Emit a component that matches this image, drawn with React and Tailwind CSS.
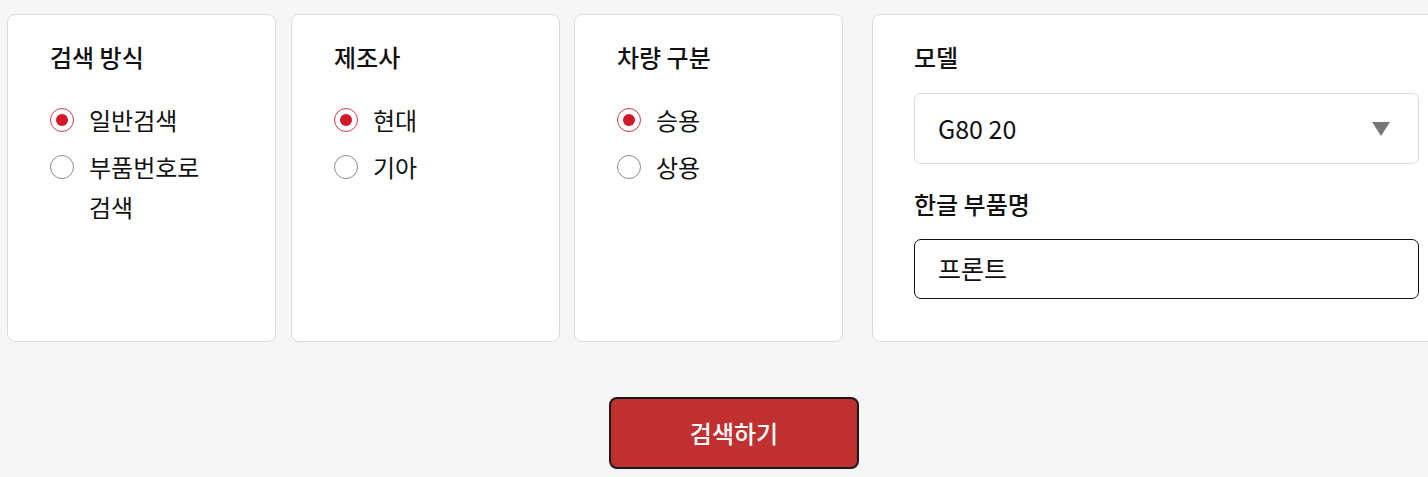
import React from "react";

const font = { fontFamily: '"Noto Sans CJK KR", "Noto Sans", sans-serif' };

function Radio({ checked, label }) {
  return (
    <div className="flex items-start">
      <span className="h-[40px] flex items-center shrink-0">
        {checked ? (
          <span className="w-[24px] h-[24px] rounded-full border border-[#d33a44] flex items-center justify-center">
            <span className="w-[12px] h-[12px] rounded-full bg-[#d0182a]" />
          </span>
        ) : (
          <span className="w-[24px] h-[24px] rounded-full border border-[#8a8a8a]" />
        )}
      </span>
      <span className="ml-[15px] text-[24px] leading-[40px] text-[#111] break-keep">{label}</span>
    </div>
  );
}

function RadioCard({ title, items, className = "" }) {
  return (
    <div className={"w-[269px] h-[328px] shrink-0 bg-white border border-[#dcdcdc] rounded-[8px] pl-[42px] pr-[30px] pt-[27px] " + className}>
      <div className="text-[24px] leading-[30px] font-medium text-[#111]">{title}</div>
      <div className="mt-[28px] flex flex-col gap-[7px]">
        {items.map((it, i) => (
          <Radio key={i} checked={i === 0} label={it} />
        ))}
      </div>
    </div>
  );
}

export default function App() {
  return (
    <div className="w-full min-h-screen overflow-hidden bg-[#f6f6f6]" style={font}>
      <div className="w-[1468px] px-[7px] pt-[14px]">
        <div className="flex">
          <RadioCard title="검색 방식" items={["일반검색", "부품번호로 검색"]} />
          <RadioCard title="제조사" items={["현대", "기아"]} className="ml-[15px]" />
          <RadioCard title="차량 구분" items={["승용", "상용"]} className="ml-[14px]" />
          <div className="ml-[29px] flex-1 h-[328px] bg-white border border-[#dcdcdc] rounded-[8px] px-[41px] pt-[27px]">
            <div className="text-[24px] leading-[30px] font-medium text-[#111]">모델</div>
            <div className="mt-[21px] h-[71px] border border-[#dcdcdc] rounded-[7px] flex items-center justify-between pl-[23px] pr-[28px]">
              <span className="text-[25px] text-[#111]">G80 20</span>
              <svg width="18" height="14" viewBox="0 0 18 14">
                <polygon points="0,0 18,0 9,14" fill="#777777" />
              </svg>
            </div>
            <div className="mt-[25px] text-[24px] leading-[30px] font-medium text-[#111]">한글 부품명</div>
            <div className="mt-[20px] h-[60px] border border-[#111] rounded-[7px] flex items-center pl-[23px]">
              <span className="text-[25px] text-[#111]">프론트</span>
            </div>
          </div>
        </div>
        <div className="flex justify-center mt-[55px]">
          <button className="w-[250px] h-[72px] bg-[#c03030] border-2 border-[#1a1a1a] rounded-[8px] text-white text-[24px] font-medium">
            검색하기
          </button>
        </div>
      </div>
    </div>
  );
}
